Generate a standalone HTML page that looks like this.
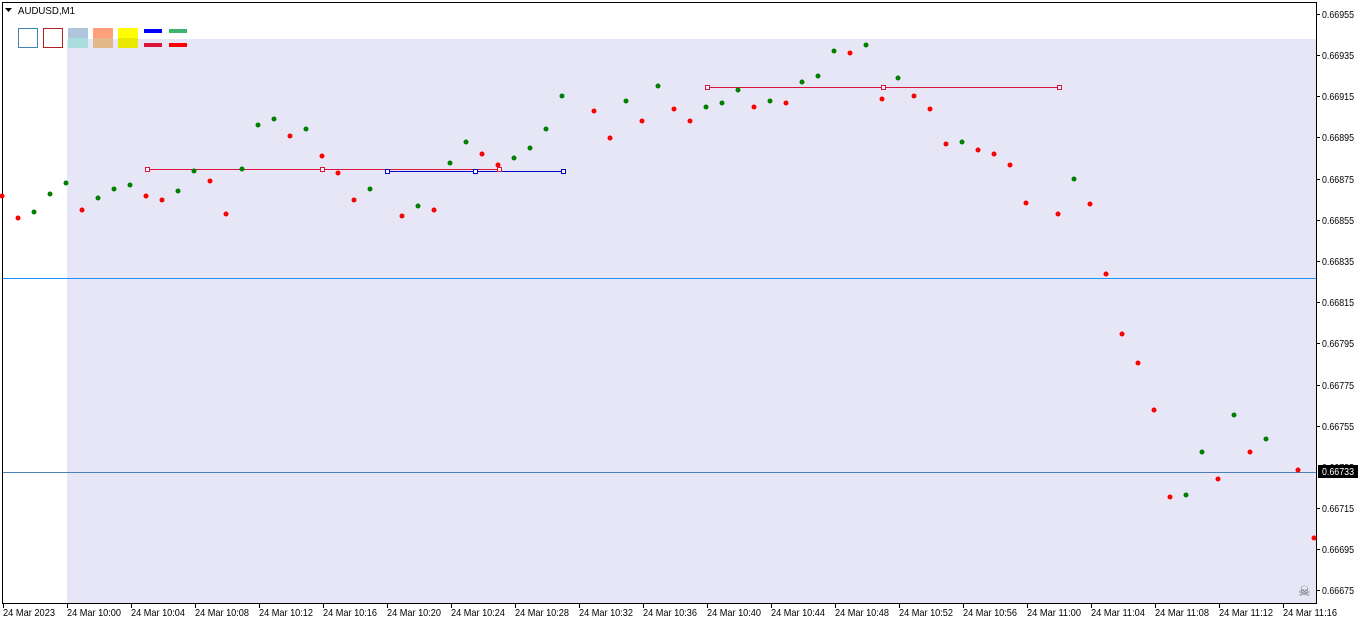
<!DOCTYPE html>
<html><head><meta charset="utf-8"><style>
body{margin:0;width:1362px;height:624px;background:#fff;overflow:hidden}
svg text{font-family:"Liberation Sans",sans-serif;font-size:10.5px;fill:#000}
</style></head><body>
<svg width="1362" height="624" xmlns="http://www.w3.org/2000/svg">
<rect x="67" y="39" width="1249" height="564" fill="#e6e6f7"/>
<rect x="2.5" y="2.5" width="1314" height="601" fill="none" stroke="#000"/>
<path d="M5 8h7l-3.5 4z" fill="#000"/>
<text x="18" y="14" textLength="57" lengthAdjust="spacingAndGlyphs">AUDUSD,M1</text>
<rect x="18.5" y="28.5" width="19" height="19" fill="#fff" stroke="#4682b4"/>
<rect x="43.5" y="28.5" width="19" height="19" fill="#fff" stroke="#b22222"/>
<rect x="68" y="28" width="20" height="10" fill="#b0c4de"/><rect x="68" y="38" width="20" height="10" fill="#aadddd"/>
<rect x="93" y="28" width="20" height="10" fill="#ffa07a"/><rect x="93" y="38" width="20" height="10" fill="#e4b98a"/>
<rect x="118" y="28" width="20" height="10" fill="#ffff00"/><rect x="118" y="38" width="20" height="10" fill="#e8e800"/>
<rect x="144" y="29" width="18" height="4" fill="#0000ff"/><rect x="144" y="43" width="18" height="4" fill="#dc143c"/>
<rect x="169" y="29" width="18" height="4" fill="#3cb371"/><rect x="169" y="43" width="18" height="4" fill="#ff0000"/>
<line x1="3" y1="278.5" x2="1316" y2="278.5" stroke="#1e90ff"/>
<line x1="3" y1="472.5" x2="1316" y2="472.5" stroke="#4a7fb8"/>
<line x1="147" y1="169.5" x2="500" y2="169.5" stroke="#dc143c"/>
<line x1="387" y1="171.5" x2="563" y2="171.5" stroke="#0000cd"/>
<line x1="707" y1="87.5" x2="1059" y2="87.5" stroke="#dc143c"/>
<g fill="#fff" stroke="#dc143c"><rect x="145.5" y="167.5" width="4" height="4"/><rect x="320.5" y="167.5" width="4" height="4"/><rect x="497.5" y="167.5" width="4" height="4"/>
<rect x="705.5" y="85.5" width="4" height="4"/><rect x="881.5" y="85.5" width="4" height="4"/><rect x="1057.5" y="85.5" width="4" height="4"/></g>
<g fill="#fff" stroke="#0000cd"><rect x="385.5" y="169.5" width="4" height="4"/><rect x="473.5" y="169.5" width="4" height="4"/><rect x="561.5" y="169.5" width="4" height="4"/></g>
<g fill="#ff0000">
<circle cx="2" cy="196" r="2.5"/><circle cx="18" cy="218" r="2.5"/><circle cx="82" cy="210" r="2.5"/><circle cx="146" cy="196" r="2.5"/><circle cx="162" cy="200" r="2.5"/><circle cx="210" cy="181" r="2.5"/><circle cx="226" cy="214" r="2.5"/><circle cx="290" cy="136" r="2.5"/><circle cx="322" cy="156" r="2.5"/><circle cx="338" cy="173" r="2.5"/><circle cx="354" cy="200" r="2.5"/><circle cx="402" cy="216" r="2.5"/><circle cx="434" cy="210" r="2.5"/><circle cx="482" cy="154" r="2.5"/><circle cx="498" cy="165" r="2.5"/><circle cx="594" cy="111" r="2.5"/><circle cx="610" cy="138" r="2.5"/><circle cx="642" cy="121" r="2.5"/><circle cx="674" cy="109" r="2.5"/><circle cx="690" cy="121" r="2.5"/><circle cx="754" cy="107" r="2.5"/><circle cx="786" cy="103" r="2.5"/><circle cx="850" cy="53" r="2.5"/><circle cx="882" cy="99" r="2.5"/><circle cx="914" cy="96" r="2.5"/><circle cx="930" cy="109" r="2.5"/><circle cx="946" cy="144" r="2.5"/><circle cx="978" cy="150" r="2.5"/><circle cx="994" cy="154" r="2.5"/><circle cx="1010" cy="165" r="2.5"/><circle cx="1026" cy="203" r="2.5"/><circle cx="1058" cy="214" r="2.5"/><circle cx="1090" cy="204" r="2.5"/><circle cx="1106" cy="274" r="2.5"/><circle cx="1122" cy="334" r="2.5"/><circle cx="1138" cy="363" r="2.5"/><circle cx="1154" cy="410" r="2.5"/><circle cx="1170" cy="497" r="2.5"/><circle cx="1218" cy="479" r="2.5"/><circle cx="1250" cy="452" r="2.5"/><circle cx="1298" cy="470" r="2.5"/><circle cx="1314" cy="538" r="2.5"/>
</g>
<g fill="#008000">
<circle cx="34" cy="212" r="2.5"/><circle cx="50" cy="194" r="2.5"/><circle cx="66" cy="183" r="2.5"/><circle cx="98" cy="198" r="2.5"/><circle cx="114" cy="189" r="2.5"/><circle cx="130" cy="185" r="2.5"/><circle cx="178" cy="191" r="2.5"/><circle cx="194" cy="171" r="2.5"/><circle cx="242" cy="169" r="2.5"/><circle cx="258" cy="125" r="2.5"/><circle cx="274" cy="119" r="2.5"/><circle cx="306" cy="129" r="2.5"/><circle cx="370" cy="189" r="2.5"/><circle cx="418" cy="206" r="2.5"/><circle cx="450" cy="163" r="2.5"/><circle cx="466" cy="142" r="2.5"/><circle cx="514" cy="158" r="2.5"/><circle cx="530" cy="148" r="2.5"/><circle cx="546" cy="129" r="2.5"/><circle cx="562" cy="96" r="2.5"/><circle cx="626" cy="101" r="2.5"/><circle cx="658" cy="86" r="2.5"/><circle cx="706" cy="107" r="2.5"/><circle cx="722" cy="103" r="2.5"/><circle cx="738" cy="90" r="2.5"/><circle cx="770" cy="101" r="2.5"/><circle cx="802" cy="82" r="2.5"/><circle cx="818" cy="76" r="2.5"/><circle cx="834" cy="51" r="2.5"/><circle cx="866" cy="45" r="2.5"/><circle cx="898" cy="78" r="2.5"/><circle cx="962" cy="142" r="2.5"/><circle cx="1074" cy="179" r="2.5"/><circle cx="1186" cy="495" r="2.5"/><circle cx="1202" cy="452" r="2.5"/><circle cx="1234" cy="415" r="2.5"/><circle cx="1266" cy="439" r="2.5"/>
</g>
<text x="1298" y="596" style="font-family:'DejaVu Sans',sans-serif;font-size:14px;fill:#666">☠</text>
<g stroke="#000">
<line x1="1316" y1="14.5" x2="1320" y2="14.5"/><line x1="1316" y1="55.5" x2="1320" y2="55.5"/><line x1="1316" y1="96.5" x2="1320" y2="96.5"/><line x1="1316" y1="137.5" x2="1320" y2="137.5"/><line x1="1316" y1="179.5" x2="1320" y2="179.5"/><line x1="1316" y1="220.5" x2="1320" y2="220.5"/><line x1="1316" y1="261.5" x2="1320" y2="261.5"/><line x1="1316" y1="302.5" x2="1320" y2="302.5"/><line x1="1316" y1="343.5" x2="1320" y2="343.5"/><line x1="1316" y1="385.5" x2="1320" y2="385.5"/><line x1="1316" y1="426.5" x2="1320" y2="426.5"/><line x1="1316" y1="508.5" x2="1320" y2="508.5"/><line x1="1316" y1="549.5" x2="1320" y2="549.5"/><line x1="1316" y1="590.5" x2="1320" y2="590.5"/>
</g>
<g>
<text x="1322" y="18" textLength="32" lengthAdjust="spacingAndGlyphs">0.66955</text><text x="1322" y="59" textLength="32" lengthAdjust="spacingAndGlyphs">0.66935</text><text x="1322" y="100" textLength="32" lengthAdjust="spacingAndGlyphs">0.66915</text><text x="1322" y="141" textLength="32" lengthAdjust="spacingAndGlyphs">0.66895</text><text x="1322" y="183" textLength="32" lengthAdjust="spacingAndGlyphs">0.66875</text><text x="1322" y="224" textLength="32" lengthAdjust="spacingAndGlyphs">0.66855</text><text x="1322" y="265" textLength="32" lengthAdjust="spacingAndGlyphs">0.66835</text><text x="1322" y="306" textLength="32" lengthAdjust="spacingAndGlyphs">0.66815</text><text x="1322" y="347" textLength="32" lengthAdjust="spacingAndGlyphs">0.66795</text><text x="1322" y="389" textLength="32" lengthAdjust="spacingAndGlyphs">0.66775</text><text x="1322" y="430" textLength="32" lengthAdjust="spacingAndGlyphs">0.66755</text><text x="1322" y="471" textLength="32" lengthAdjust="spacingAndGlyphs">0.66735</text><text x="1322" y="512" textLength="32" lengthAdjust="spacingAndGlyphs">0.66715</text><text x="1322" y="553" textLength="32" lengthAdjust="spacingAndGlyphs">0.66695</text><text x="1322" y="594" textLength="32" lengthAdjust="spacingAndGlyphs">0.66675</text>
</g>
<rect x="1318" y="465" width="40" height="13" fill="#000"/>
<text x="1322" y="475" textLength="32" lengthAdjust="spacingAndGlyphs" style="fill:#fff">0.66733</text>
<g stroke="#000">
<line x1="3.5" y1="603" x2="3.5" y2="608"/><line x1="67.5" y1="603" x2="67.5" y2="608"/><line x1="131.5" y1="603" x2="131.5" y2="608"/><line x1="195.5" y1="603" x2="195.5" y2="608"/><line x1="259.5" y1="603" x2="259.5" y2="608"/><line x1="323.5" y1="603" x2="323.5" y2="608"/><line x1="387.5" y1="603" x2="387.5" y2="608"/><line x1="451.5" y1="603" x2="451.5" y2="608"/><line x1="515.5" y1="603" x2="515.5" y2="608"/><line x1="579.5" y1="603" x2="579.5" y2="608"/><line x1="643.5" y1="603" x2="643.5" y2="608"/><line x1="707.5" y1="603" x2="707.5" y2="608"/><line x1="771.5" y1="603" x2="771.5" y2="608"/><line x1="835.5" y1="603" x2="835.5" y2="608"/><line x1="899.5" y1="603" x2="899.5" y2="608"/><line x1="963.5" y1="603" x2="963.5" y2="608"/><line x1="1027.5" y1="603" x2="1027.5" y2="608"/><line x1="1091.5" y1="603" x2="1091.5" y2="608"/><line x1="1155.5" y1="603" x2="1155.5" y2="608"/><line x1="1219.5" y1="603" x2="1219.5" y2="608"/><line x1="1283.5" y1="603" x2="1283.5" y2="608"/>
</g>
<g>
<text x="3" y="616" textLength="52" lengthAdjust="spacingAndGlyphs">24 Mar 2023</text><text x="67" y="616" textLength="54" lengthAdjust="spacingAndGlyphs">24 Mar 10:00</text><text x="131" y="616" textLength="54" lengthAdjust="spacingAndGlyphs">24 Mar 10:04</text><text x="195" y="616" textLength="54" lengthAdjust="spacingAndGlyphs">24 Mar 10:08</text><text x="259" y="616" textLength="54" lengthAdjust="spacingAndGlyphs">24 Mar 10:12</text><text x="323" y="616" textLength="54" lengthAdjust="spacingAndGlyphs">24 Mar 10:16</text><text x="387" y="616" textLength="54" lengthAdjust="spacingAndGlyphs">24 Mar 10:20</text><text x="451" y="616" textLength="54" lengthAdjust="spacingAndGlyphs">24 Mar 10:24</text><text x="515" y="616" textLength="54" lengthAdjust="spacingAndGlyphs">24 Mar 10:28</text><text x="579" y="616" textLength="54" lengthAdjust="spacingAndGlyphs">24 Mar 10:32</text><text x="643" y="616" textLength="54" lengthAdjust="spacingAndGlyphs">24 Mar 10:36</text><text x="707" y="616" textLength="54" lengthAdjust="spacingAndGlyphs">24 Mar 10:40</text><text x="771" y="616" textLength="54" lengthAdjust="spacingAndGlyphs">24 Mar 10:44</text><text x="835" y="616" textLength="54" lengthAdjust="spacingAndGlyphs">24 Mar 10:48</text><text x="899" y="616" textLength="54" lengthAdjust="spacingAndGlyphs">24 Mar 10:52</text><text x="963" y="616" textLength="54" lengthAdjust="spacingAndGlyphs">24 Mar 10:56</text><text x="1027" y="616" textLength="54" lengthAdjust="spacingAndGlyphs">24 Mar 11:00</text><text x="1091" y="616" textLength="54" lengthAdjust="spacingAndGlyphs">24 Mar 11:04</text><text x="1155" y="616" textLength="54" lengthAdjust="spacingAndGlyphs">24 Mar 11:08</text><text x="1219" y="616" textLength="54" lengthAdjust="spacingAndGlyphs">24 Mar 11:12</text><text x="1283" y="616" textLength="54" lengthAdjust="spacingAndGlyphs">24 Mar 11:16</text>
</g>
</svg>
</body></html>
